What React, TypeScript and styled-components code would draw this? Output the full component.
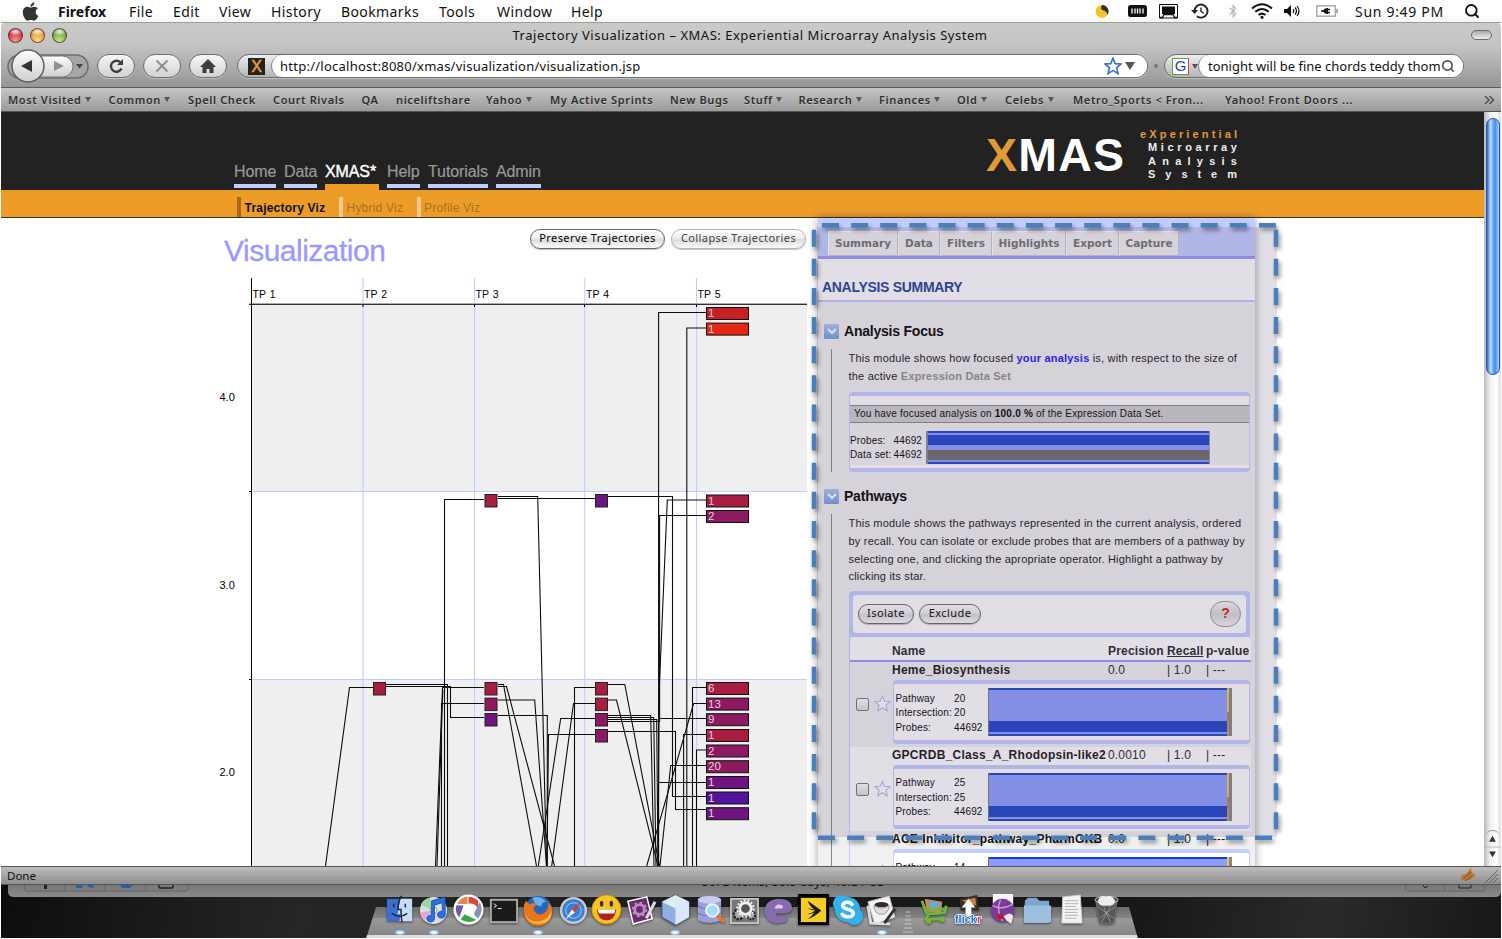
import React from "react";
import styled, { createGlobalStyle } from "styled-components";
import { FaApple, FaBluetoothB } from "react-icons/fa";
import { Search } from "lucide-react";

const UI = `"Noto Sans", "Open Sans", sans-serif`;
const SANS = `"Liberation Sans", Arial, sans-serif`;
const VERD = `"DejaVu Sans", Verdana, sans-serif`;

const Global = createGlobalStyle`
  * { box-sizing: border-box; }
  body { margin: 0; background: #fff; overflow: hidden; }
`;

const Screen = styled.div`
  width: 1501px; height: 938px; padding-left: 1px; display: flex; flex-direction: column;
  overflow: hidden; font-family: ${UI}; background: #fff; position: relative;
`;

/* ---------- menu bar ---------- */
const MenuBar = styled.div`
  height: 23px; flex: none; display: flex; align-items: center; padding-left: 19px;
  background: linear-gradient(#fff 60%, #f3f7f0); border-bottom: 1px solid #9aa097; color: #111;
`;
const MenuItem = styled.span<{ $w: number; $ls?: number; $b?: boolean }>`
  width: ${p => p.$w}px; flex: none; font-size: 14px; line-height: 22px; white-space: nowrap; padding-top: 1px;
  letter-spacing: ${p => p.$ls ?? 0.4}px; font-weight: ${p => (p.$b ? 700 : 400)};
`;
const MenuIcon = styled.span<{ $w: number }>`
  width: ${p => p.$w}px; flex: none; display: flex; align-items: center; height: 22px;
  svg { display: block; }
`;

/* ---------- browser chrome ---------- */
const Chrome = styled.div`
  height: 65px; flex: none; background: linear-gradient(#cacaca 0, #c4c4c4 35%, #959595);
  border-bottom: 1px solid #5c5c5c; border-radius: 4px 4px 0 0; display: flex; flex-direction: column;
`;
const TitleRow = styled.div`
  height: 24px; display: flex; align-items: center; padding: 0 9px 0 7px; justify-content: space-between;
`;
const Lights = styled.div`display: flex; gap: 7px; width: 60px;`;
const Light = styled.span<{ $a: string; $b: string }>`
  width: 15px; height: 15px; border-radius: 50%; border: 1px solid rgba(60,30,20,.65);
  background: radial-gradient(ellipse 60% 32% at 50% 20%, rgba(255,255,255,.9), rgba(255,255,255,0)),
    radial-gradient(circle at 50% 90%, ${p => p.$b}, ${p => p.$a} 75%);
`;
const WinTitle = styled.span`font-size: 13px; color: #111; letter-spacing: 0.52px; white-space: nowrap;`;
const Pill = styled.span`
  width: 21px; height: 10px; border-radius: 5px; border: 1.5px solid #6b6b6b; background: linear-gradient(#aaa, #eee);
`;
const NavRow = styled.div`height: 40px; display: flex; align-items: center; padding: 0 0 2px 6px;`;
const KeyHole = styled.svg`width: 84px; height: 36px; flex: none; display: block; margin-right: 6px;`;
const RoundBtn = styled.span`
  width: 38px; height: 24px; margin-right: 8px; flex: none; border-radius: 12px; border: 1.5px solid #6d6d6d;
  background: linear-gradient(#f6f6f6, #d2d2d2); display: flex; align-items: center; justify-content: center;
  box-shadow: 0 1px 0 rgba(255,255,255,.35);
`;
const Field = styled.div<{ $w: number; $ml: number }>`
  width: ${p => p.$w}px; margin-left: ${p => p.$ml}px; height: 24px; flex: none; display: flex; align-items: stretch;
  border: 1.5px solid #6d6d6d; border-radius: 12px; background: linear-gradient(#eee, #b4b4b4); overflow: hidden;
  box-shadow: 0 1px 0 rgba(255,255,255,.35);
`;
const FieldHead = styled.div<{ $w: number; $pl?: number }>`
  width: ${p => p.$w}px; flex: none; display: flex; align-items: center; gap: 3px; padding-left: ${p => p.$pl ?? 10}px;
`;
const FieldBody = styled.div<{ $pl?: number; $ls?: number }>`
  flex: 1; background: #fff; border-radius: 12px 0 0 12px; border-left: 1px solid #888; display: flex; align-items: center;
  padding-left: ${p => p.$pl ?? 8}px; font-size: 13px; color: #111; white-space: nowrap; letter-spacing: ${p => p.$ls ?? .25}px;
`;
const Favicon = styled.span`
  width: 17px; height: 17px; background: #222; color: #f09c27; font: 16px/17px ${SANS}; text-align: center;
  -webkit-text-stroke: .5px #f09c27; letter-spacing: 0;
`;
const GIcon = styled.span`
  width: 17px; height: 17px; background: #fff; border: 1.5px solid #5ba83a; border-right-color: #d33; color: #2a3fae;
  font: 15px/14px ${SANS}; text-align: center; letter-spacing: 0;
`;
const Spring = styled.span`flex: 1;`;
const Dot = styled.span`width: 4px; height: 4px; border-radius: 2px; background: #777; margin-left: 6px;`;

const Bookmarks = styled.div`
  height: 24px; flex: none; display: flex; align-items: center; padding-left: 7px; background: linear-gradient(#c6c6c6, #9a9a9a);
  border-bottom: 1px solid #555;
`;
const Bookmark = styled.span<{ $w: number }>`
  width: ${p => p.$w}px; flex: none; display: flex; align-items: center; gap: 3.5px; white-space: nowrap;
  font: 600 11px/22px ${UI}; color: #2e2e2e; letter-spacing: .62px; text-shadow: 0 1px 0 rgba(255,255,255,.3);
`;
const Caret = styled.i`border: 3.5px solid transparent; border-top: 5px solid #555; border-bottom: 0;`;

/* ---------- page ---------- */
const Viewport = styled.div`height: 754px; flex: none; display: flex; overflow: hidden;`;
const Page = styled.div`width: 1483px; flex: none; display: flex; flex-direction: column; overflow: hidden; background: #fff;`;
const Scrollbar = styled.div`
  flex: 1; background: linear-gradient(90deg, #c4c4c4, #f2f2f2 35%, #fff 70%, #ddd); border-left: 1px solid #bbb;
  display: flex; flex-direction: column; justify-content: space-between; padding-top: 6px;
`;
const Thumb = styled.div`
  height: 257px; margin: 0 1px; border-radius: 7px; border: 1px solid #2a52b0;
  background: linear-gradient(90deg, #2f62cf, #b9dcff 30%, #5ea2f4 55%, #4a8fee 70%, #a9d8ff);
`;
const Arrows = styled.svg`width: 15px; height: 36px; display: block; border-top: 1px solid #999; border-radius: 7px 7px 0 0;`;
const Header = styled.header`
  height: 78px; flex: none; background: #222; display: flex; align-items: flex-end; padding-left: 233px;
`;
const NavTabs = styled.nav`display: flex; gap: 8px; width: 752px;`;
const NavTab = styled.a<{ $w: number; $on?: boolean }>`
  width: ${p => p.$w}px; font: 16px/24px ${SANS}; letter-spacing: -.1px; white-space: nowrap; display: flex; flex-direction: column;
  color: ${p => (p.$on ? "#fff" : "#999")}; -webkit-text-stroke: ${p => (p.$on ? "0.4px #fff" : "0.2px #999")};
  &::after { content: ""; height: ${p => (p.$on ? 6 : 4)}px; margin: 0 0 ${p => (p.$on ? 0 : 2)}px; background: ${p => (p.$on ? "#ed9c28" : "#c2cdff")}; }
`;
const Logo = styled.div`
  font: bold 46.5px/48px ${SANS}; color: #fff; letter-spacing: 1.2px; width: 153px; height: 59px; white-space: nowrap;
  em { font-style: normal; color: #e29a35; }
`;
const LogoWords = styled.div`
  font: bold 11px/13.3px ${SANS}; color: #eee; width: 98px; height: 62px; display: flex; flex-direction: column; align-items: flex-end;
`;
const LogoWord = styled.span<{ $w: number; $c?: string }>`
  width: ${p => p.$w}px; display: flex; justify-content: space-between; color: ${p => p.$c ?? "#eee"};
`;
const SubNav = styled.div`
  height: 28px; flex: none; background: #ed9c28; border-bottom: 1px solid #3b3226; display: flex; align-items: flex-end; padding-left: 236px;
`;
const SubItem = styled.span<{ $w: number; $on?: boolean }>`
  width: ${p => p.$w}px; height: 20px; border-left: 4px solid ${p => (p.$on ? "#a8691a" : "#f8cc8a")}; padding-left: 3.5px;
  font: ${p => (p.$on ? "bold" : "normal")} 12px/22.5px ${SANS}; color: ${p => (p.$on ? "#111" : "#a8741f")};
  letter-spacing: .22px; white-space: nowrap;
`;
const Main = styled.div`flex: 1; display: flex; min-height: 0;`;
const VizColumn = styled.section`width: 817px; flex: none; padding-left: 211px; padding-top: 10px;`;
const VizHead = styled.div`display: flex; height: 42px; padding-left: 12px;`;
const H1 = styled.h1`margin: 0; width: 306px; font: 30px/45px ${SANS}; letter-spacing: -.5px; color: #9999ff; -webkit-text-stroke: .3px #9999ff;`;
const AquaButton = styled.button<{ $w: number; $dim?: boolean; $mr?: number }>`
  width: ${p => p.$w}px; height: 20px; padding: 0 0 2px; flex: none; margin: 1px ${p => p.$mr ?? 6}px 0 0; border-radius: 10px;
  border: 1.5px solid ${p => (p.$dim ? "#b5b5b5" : "#666")}; background: linear-gradient(#fff, #ededed 45%, #dcdcdc 55%, #fafafa);
  font: 11px/14px ${UI}; letter-spacing: .42px; color: ${p => (p.$dim ? "#444" : "#000")}; white-space: nowrap;
  box-shadow: 0 1px 1px rgba(0,0,0,.25);
`;
const ChartSvg = styled.svg`display: block; width: 596px; height: 596px;`;

/* ---------- side panel ---------- */
const Panel = styled.aside`
  width: 437px; flex: none; height: 700px; background: #f0f0f0; box-shadow: 0 0 9px rgba(0,0,0,.38);
  display: flex; flex-direction: column; font-family: ${SANS}; color: #000;
`;
const Tabs = styled.div`
  height: 41px; flex: none; background: #c2cdff; border-bottom: 3px solid #9999ff; display: flex; align-items: flex-end; padding-left: 10px;
`;
const Tab = styled.span<{ $w: number; $ls?: number }>`
  width: ${p => p.$w}px; height: 25px; background: #f0f0f0; border-right: 1px solid #c8c8c8; border-bottom: 1px solid #c8c8c8;
  border-left: 1px solid #fff; border-top: 1px solid #fff;
  font: bold 10.5px/23px ${VERD}; color: #707070; text-align: center; letter-spacing: ${p => p.$ls ?? 0}px; white-space: nowrap;
`;
const PanelTitle = styled.h2`
  margin: 0; height: 43px; flex: none; padding: 19px 0 0 4px; background: #fff; border-bottom: 2px solid #c6c4ff; 
  font: bold 14px/18px ${SANS}; letter-spacing: -.3px; color: #1c3c97;
`;
const ModuleHead = styled.h3<{ $mt: number; $ls?: number }>`
  margin: ${p => p.$mt}px 0 0; height: 16px; flex: none; display: flex; align-items: center; gap: 5px; padding-left: 6px;
  font: bold 14px/16px ${SANS}; letter-spacing: -.22px;
`;
const Toggle = styled.span`
  width: 15px; height: 15px; background: linear-gradient(#a9c8f5, #6f9ee0); display: flex; align-items: center; justify-content: center;
  border-radius: 1px;
`;
const ModuleBody = styled.div<{ $h: number }>`
  margin: 10px 0 0 13px; height: ${p => p.$h}px; border-left: 1px solid #888; padding: 1px 5px 0 17px; display: flex; flex-direction: column;
`;
const Line = styled.div`
  font: 11px/17.8px ${SANS}; letter-spacing: .2px; white-space: nowrap; color: #111; margin-left: -.5px;
`;
const Blue = styled.b`color: #1414ff;`;
const Grey = styled.b`color: #8f8f8f;`;
const FocusBox = styled.div`
  margin-top: 6px; height: 81px; border: 1px solid #c2cdff; border-top-width: 4px; border-bottom-width: 4px; border-radius: 4px; background: #fff;
  display: flex; flex-direction: column;
`;
const FocusNote = styled.div`
  margin-top: 9px; height: 18px; background: #cecece; border: solid #888; border-width: 1px 0; padding-left: 4px;
  font: 10px/16px ${SANS}; letter-spacing: .21px; white-space: nowrap;
`;
const FocusData = styled.div`height: 42px; background: #f3f3f3; display: flex; padding-top: 8px;`;
const Stat = styled.div<{ $w: number; $lh?: number; $pt?: number }>`
  width: ${p => p.$w}px; flex: none; font: 10px/${p => p.$lh ?? 14.6}px ${SANS}; white-space: nowrap; letter-spacing: .15px; padding-top: ${p => p.$pt ?? 3}px;
`;
const FocusBars = styled.div`
  width: 284px; height: 33px; border-left: 2px solid #888; border-right: 1px solid #999;
  background: linear-gradient(#1a3fc9 0 2px, #8a9dff 2px 4px, #1a3fc9 4px 14px, #8a9dff 14px 19px, #6b6b6b 19px 29px, #8a9dff 29px 31px, #1a3fc9 31px);
`;
const Operators = styled.div`
  margin-top: 5px; height: 46px; flex: none; border: 4px solid #c2cdff; border-radius: 4px 4px 0 0; background: #c2cdff;
`;
const OperatorsInner = styled.div`
  height: 38px; border-radius: 4px; background: #fff; display: flex; align-items: center; padding: 0 5px;
  justify-content: space-between;
`;
const Group = styled.div`display: flex; padding-bottom: 2px;`;
const HelpButton = styled.span`
  width: 31px; height: 26px; border-radius: 13px; border: 1.5px solid #999; background: linear-gradient(#f8f8f8, #d8d8d8 50%, #f2f2f2);
  color: #d8182a; font: bold 14px/23px ${SANS}; text-align: center;
`;
const Table = styled.div`border-left: 1px solid #c2cdff; margin-right: -1px; flex: 1; background: #f4f4f4;`;
const Row = styled.div<{ $alt?: boolean }>`height: 84.6px; background: ${p => (p.$alt ? "#fff" : "#f0f0f0")};`;
const Cols = styled.div<{ $head?: boolean }>`
  display: grid; grid-template-columns: 42px 216px 59px 39px 1fr; white-space: nowrap; color: #222;
  height: ${p => (p.$head ? 25 : 18)}px; padding-top: ${p => (p.$head ? 6 : 0)}px; font: ${p => (p.$head ? "bold" : "normal")} 12px/17px ${SANS};
  letter-spacing: .18px;
  ${p => p.$head && "background: #fff; border-radius: 4px 4px 0 0; border-bottom: 2px solid #9999ff;"}
  b { letter-spacing: .26px; color: #111; }
`;
const RowBody = styled.div`display: flex; align-items: flex-start;`;
const Check = styled.span`
  width: 13px; height: 13px; margin: 18px 5px 0 6px; border: 1.5px solid #777; border-radius: 2px; background: linear-gradient(#fff, #ddd);
`;
const StarCell = styled.span`margin-top: 15px; display: flex;`;
const RowBox = styled.div`
  margin-left: 2px; width: 357px; height: 64px; border: 1px solid #c2cdff; border-top-width: 4px; border-bottom-width: 4px; border-radius: 4px;
  background: #fff; display: flex; padding: 4px 0 0 1.5px;
`;
const RowBars = styled.div`
  width: 244px; height: 48px; border-left: 1px solid #777; border-right: 2px solid #8a8580;
  background: linear-gradient(#1a3fc9 0 2px, #8a9dff 2px 33px, #1a3fc9 33px 44px, #8a9dff 44px 46px, #1a3fc9 46px);
  display: flex; justify-content: flex-end;
  &::after { content: ""; width: 2px; border-right: 1px solid #8a8580; background: linear-gradient(#e6c95a 50%, #d0704a 50%, #c89a6a); }
`;

/* translucent callout drawn over the side panel */
const Callout = styled.svg`position: absolute; left: 805px; top: 215px; width: 485px; height: 635px; pointer-events: none;`;
const Dashes = styled.g`filter: drop-shadow(2px 3px 2px rgba(0,0,0,.4));`;

/* ---------- bottom ---------- */
const StatusBar = styled.div`
  height: 19px; flex: none; background: linear-gradient(#bdbdbd, #8d8d8d); border-top: 1px solid #555; border-bottom: 1px solid #555;
  display: flex; align-items: center; padding: 0 3px 0 6px; justify-content: space-between; font: 11.5px/17px ${UI}; color: #111;
`;
const Desktop = styled.div`
  flex: 1; background: linear-gradient(100deg, #0c0d0d, #252725 20%, #1a1b1a 50%, #161716 75%, #2a2b29 88%, #171817); display: flex; flex-direction: column;
`;
const BackWindow = styled.div`
  height: 12px; flex: none; margin-left: 7px; border-radius: 0 0 5px 5px; background: linear-gradient(#777, #8a8a8a); overflow: hidden;
  display: flex; padding: 0 16px 0 16px; font: 11px/12px ${UI}; color: #111;
  svg { flex: none; }
`;
const BackText = styled.span`margin: -9px auto 0 514px; letter-spacing: .6px; height: 14px; font-weight: 500; white-space: nowrap;`;
const DockArea = styled.div`height: 42px; display: flex; margin-left: 365px; width: 772px; position: relative;`;
const DockShelf = styled.svg`position: absolute; left: 0; top: 10px; width: 772px; height: 32px;`;
const DockRow = styled.div`position: relative; display: flex; margin: -4.5px 0 0 16.6px;`;
const Slot = styled.span<{ $run?: boolean }>`
  width: 34.45px; height: 44px; display: flex; flex-direction: column; align-items: center;
  svg { display: block; width: 33px; height: 33px; filter: drop-shadow(0 1px 1px rgba(0,0,0,.5)); }
  &::after { content: ""; width: 10px; height: 5px; margin-top: 4px; border-radius: 50%;
    background: ${p => (p.$run ? "radial-gradient(#fff 25%, #8cc4ff 60%, transparent)" : "none")}; }
`;
const DockGap = styled.span`width: 17.6px; display: flex; justify-content: center; padding-top: 18px; svg { width: 10px; height: 22px; opacity: .6; }`;

/* ---------- data ---------- */
const bookmarks: [string, number, boolean][] = [
  ["Most Visited", 100.5, true], ["Common", 79.5, true], ["Spell Check", 85, false], ["Court Rivals", 88.5, false], ["QA", 34.5, false],
  ["niceliftshare", 90, false], ["Yahoo", 64, true], ["My Active Sprints", 120, false], ["New Bugs", 74, false], ["Stuff", 54.5, true],
  ["Research", 80.5, true], ["Finances", 78, true], ["Old", 48, true], ["Celebs", 68, true], ["Metro_Sports < Fron...", 152, false],
  ["Yahoo! Front Doors ...", 259, false],
];
const R = "#a81d42", M = "#8b1a60", P = "#6f1480";
const groups: [number, number, string, string][] = [
  [706, 307, "#c62026", "1"], [706, 322.6, "#e22813", "1"], [706, 494.5, R, "1"], [706, 510, M, "2"],
  [706, 682, R, "6"], [706, 697.6, M, "13"], [706, 713.2, M, "9"], [706, 729, R, "1"], [706, 744.5, M, "2"],
  [706, 760.2, M, "20"], [706, 776, P, "1"], [706, 791.5, "#51139b", "1"], [706, 807.2, P, "1"],
];
const nodes: [number, number, string][] = [
  [484.5, 494, R], [595, 494, P], [373, 682, R], [484.5, 682, R], [484.5, 697.6, M], [484.5, 713, P],
  [595, 682, R], [595, 697.6, R], [595, 713, M], [595, 729, M],
];
const paths = [
  "M325.5 866L349.5 687.5H373", "M386 684.5H447.5V866", "M386 686.5H450.5V717.5H484", "M444.5 866V499.5H484",
  "M484 687.5H442.5L435.5 866", "M484 703.5H441.5V866", "M442.8 690L437 866",
  "M498 684.5H503.5L536.5 866", "M498 686.5H506.5L554.5 866", "M498 700H534.7L546.5 866", "M498 715.5H547.3V866",
  "M498 496.5H537.7L546.5 866", "M498 498.5H595", "M595 687.5H574.5V866", "M595 703.5H573.5L551.7 866",
  "M595 718.5H560.7L538.3 866", "M595 734.5H548.5L547 866", "M608 684.5H624.8L659.5 866", "M608 700H616.5L658 866",
  "M608 715.5H650.7L654 866", "M608 717.5H653.7L656 866", "M608 719.5H656.7L658 866", "M608 721.5H659.6V515.5H706",
  "M659.5 718.5H706", "M706 312.5H658.6V866", "M706 782.5H658.6", "M608 731.5H675.5V809.5H706", "M608 496.5H672.5V796.5H706",
  "M706 328H686.8V866", "M706 500H667.3L659.2 690L658 866", "M706 687.5H692.5V866", "M706 703.5H693.6L646.7 866",
  "M706 734.5H683.6V866", "M706 750H696.5V866", "M706 765.5H670.7L660 866",
];

const Chart = () => (
  <ChartSvg viewBox="212 270 596 596" fontFamily={SANS}>
    <rect x="252" y="305" width="555" height="186" fill="#efefef" />
    <rect x="252" y="680" width="555" height="187" fill="#efefef" />
    <g fill="#c2cdff">
      <rect x="362" y="278" width="2" height="590" opacity=".6" />
      {[474, 584.2, 696].map(x => <rect key={x} x={x} y="278" width="1.1" height="590" />)}
      <rect x="252" y="491" width="555" height="1" />
      <rect x="252" y="679" width="555" height="1" />
    </g>
    <rect x="249" y="303" width="558" height="1" fill="#aaa" />
    <rect x="249" y="304" width="558" height="1" fill="#333" />
    <rect x="251" y="278" width="1" height="590" />
    {[362.5, 474, 584, 696].map(x => <rect key={x} x={x} y="305" width="1" height="2" />)}
    <rect x="249" y="491" width="2" height="1" />
    <rect x="249" y="679" width="2" height="1" />
    <g fontSize="10.5">
      {[252.5, 364, 475.5, 586, 697.5].map((x, i) => <text key={x} x={x} y="298" wordSpacing="1">TP {i + 1}</text>)}
    </g>
    <g fontSize="11">
      <text x="219.5" y="401">4.0</text>
      <text x="219.5" y="588.5">3.0</text>
      <text x="219.5" y="776">2.0</text>
    </g>
    <g fill="none" stroke="#000" strokeWidth="1.1" opacity=".95">{paths.map((d, i) => <path key={i} d={d} />)}</g>
    {nodes.map(([x, y, c], i) => <rect key={i} x={x + 0.5} y={y + 0.5} width="12" height="12.5" fill={c} stroke="#222" />)}
    {groups.map(([x, y, c, n], i) => (
      <g key={i}>
        <rect x={x + 0.5} y={y + 0.5} width="42" height="12" fill={c} stroke="#111" />
        <text x={x + 2} y={y + 10} fontSize="11.5" fill="#f0d0de">{n}</text>
      </g>
    ))}
  </ChartSvg>
);

const Star = ({ s, c, w }: { s: number; c: string; w: number }) => (
  <svg width={s} height={s} viewBox="0 0 18 18"><path d="M9 1.2l2.2 5.4 5.8.4-4.4 3.8 1.4 5.8L9 13.4l-5 3.2 1.4-5.8L1 7l5.8-.4z" fill="#fff" stroke={c} strokeWidth={w} /></svg>
);
const Chevron = () => (
  <svg width="10" height="8" viewBox="0 0 10 8"><path d="M1 2l4 4 4-4" stroke="#fff" strokeWidth="2" fill="none" /></svg>
);

const PathwayRow = ({ name, precision, n, alt }: { name: string; precision: string; n: string; alt?: boolean }) => (
  <Row $alt={alt}>
    <Cols><span /><b>{name}</b><span>{precision}</span><span>| 1.0</span><span>| ---</span></Cols>
    <RowBody>
      <Check />
      <StarCell><Star s={17} c="#a9bff0" w={1.2} /></StarCell>
      <RowBox>
        <Stat $w={58.5} $lh={14.5} $pt={3.5}>Pathway<br />Intersection:<br />Probes:</Stat>
        <Stat $w={34} $lh={14.5} $pt={3.5}>{n}<br />{n}<br />44692</Stat>
        <RowBars />
      </RowBox>
    </RowBody>
  </Row>
);

const Sidebar = () => (
  <Panel>
    <Tabs>
      <Tab $w={70}>Summary</Tab><Tab $w={42}>Data</Tab><Tab $w={52}>Filters</Tab><Tab $w={74}>Highlights</Tab><Tab $w={53}>Export</Tab><Tab $w={60}>Capture</Tab>
    </Tabs>
    <PanelTitle>ANALYSIS SUMMARY</PanelTitle>
    <ModuleHead $mt={21}><Toggle><Chevron /></Toggle>Analysis Focus</ModuleHead>
    <ModuleBody $h={123}>
      <Line>This module shows how focused <Blue>your analysis</Blue> is, with respect to the size of</Line>
      <Line>the active <Grey>Expression Data Set</Grey></Line>
      <FocusBox>
        <FocusNote>You have focused analysis on <b>100.0 %</b> of the Expression Data Set.</FocusNote>
        <FocusData>
          <Stat $w={43.5}>Probes:<br />Data set:</Stat>
          <Stat $w={32.5}>44692<br />44692</Stat>
          <FocusBars />
        </FocusData>
      </FocusBox>
    </ModuleBody>
    <ModuleHead $mt={16}><Toggle><Chevron /></Toggle>Pathways</ModuleHead>
    <ModuleBody $h={400}>
      <Line>This module shows the pathways represented in the current analysis, ordered</Line>
      <Line>by recall. You can isolate or exclude probes that are members of a pathway by</Line>
      <Line>selecting one, and clicking the apropriate operator. Highlight a pathway by</Line>
      <Line>clicking its star.</Line>
      <Operators>
        <OperatorsInner>
          <Group><AquaButton $w={56} $mr={5}>Isolate</AquaButton><AquaButton $w={62}>Exclude</AquaButton></Group>
          <HelpButton>?</HelpButton>
        </OperatorsInner>
      </Operators>
      <Table>
        <Cols $head><span /><span>Name</span><span>Precision</span><u>Recall</u><span>p-value</span></Cols>
        <PathwayRow name="Heme_Biosynthesis" precision="0.0" n="20" />
        <PathwayRow name="GPCRDB_Class_A_Rhodopsin-like2" precision="0.0010" n="25" alt />
        <PathwayRow name="ACE-Inhibitor_pathway_PharmGKB" precision="0.0" n="14" />
      </Table>
    </ModuleBody>
  </Panel>
);

const CalloutBox = () => (
  <Callout viewBox="805 215 485 635">
    <rect x="817" y="227" width="460" height="610" fill="rgb(108,92,128)" opacity=".2" />
    <Dashes stroke="#4a7fbb" strokeWidth="4.5" fill="none" strokeDasharray="17 12.13">
      <path d="M822 225.3H1277" />
      <path d="M814 229.7V835" />
      <path d="M1276 229.7V835" />
      <path d="M818 837.8H1273" />
    </Dashes>
  </Callout>
);

/* ---------- dock icons ---------- */
const dockIcons: { run?: boolean; art: React.ReactNode }[] = [
  { run: true, art: <><rect x="4" y="6" width="26" height="23" fill="#3b6fd0" /><path d="M18 6h12v23H17l1-7h-3z" fill="#c9dcf5" /><path d="M19 3q-4 7-3.5 14h3q0 7 1 13M9 21q8 6 16 0" fill="none" stroke="#182640" strokeWidth="1.5" /><path d="M11 11v4M23 11v4" stroke="#182640" strokeWidth="1.5" /></> },
  { run: true, art: <><circle cx="16" cy="18" r="14" fill="#d8dde2" /><path d="M16 18L3 12A14 14 0 0 1 12 5z" fill="#9bd89a" /><path d="M16 18L6 28A14 14 0 0 1 2 20z" fill="#e3a9d0" /><circle cx="16" cy="18" r="3.5" fill="#fff" stroke="#999" /><path d="M14 8l14-4v18a4 3.500 0 1 1-3-3V10l-8 2.500V26a4 3.500 0 1 1-3-3z" fill="#2b6fe0" stroke="#1748a8" strokeWidth=".8" /></> },
  { art: <><circle cx="17" cy="17" r="15.5" fill="#fff" /><path d="M17 11V4a13.500 13.500 0 0 1 10 4v10a8 8 0 0 0-10-7z" fill="#d9453b" /><path d="M16 3.500v8L5.500 11A13.500 13.500 0 0 1 16 3.500z" fill="#e08a4a" /><path d="M28.500 9.500a14 14 0 0 1-2 17l-4-5z" fill="#8492b5" /><path d="M4.500 12.500L12 13l-4.500 12a13.500 13.500 0 0 1-3-12.500z" fill="#6a58a8" /><path d="M13 22l12 5.500a13.500 13.500 0 0 1-16-.5z" fill="#3fa348" /><circle cx="17" cy="17" r="6" fill="#fff" /></> },
  { art: <><rect x="3" y="6" width="29" height="25" fill="#aaa" /><rect x="5" y="8" width="25" height="21" fill="#1b1b1b" /><path d="M7 11l3 2-3 2M11 16h4" stroke="#eee" fill="none" /></> },
  { run: true, art: <><circle cx="18" cy="17" r="14" fill="#2a66b8" /><path d="M12 5q8-3 14 4-5 0-5 5l-6-2z" fill="#6db0ea" /><path d="M5 8l4 4q4-3 7 0-5 3-2 7 4 5 9 2 6-3 5-11 5 4 4 10A14.500 14.500 0 0 1 3 19Q2 13 5 8z" fill="#e8751a" /><path d="M4 20q3 11 15 9 10-2 12-11 2 12-12 14Q6 32 4 20z" fill="#f5b83c" /></> },
  { art: <><circle cx="18" cy="18" r="14" fill="#c8ccd0" /><circle cx="18" cy="18" r="11.5" fill="#3a7fd0" /><circle cx="18" cy="18" r="8" fill="none" stroke="#a8d0f5" /><path d="M26 9l-6.500 11-3-3z" fill="#e03a2a" /><path d="M10 27l6.500-10 3 3z" fill="#fff" /></> },
  { art: <><circle cx="17" cy="17" r="15" fill="#f7c51e" stroke="#d9900f" /><ellipse cx="12" cy="11" rx="1.8" ry="3" fill="#3a2a7a" /><ellipse cx="22" cy="11" rx="1.8" ry="3" fill="#3a2a7a" /><path d="M7 17h20q-1 11-10 11T7 17z" fill="#b3201a" /><path d="M8 17h18l-1 4H9z" fill="#fff" /></> },
  { art: <><path d="M3 8l21-5 6 24-21 6z" fill="#fff" /><path d="M5 9l18-4 5 21-18 5z" fill="#6e2a70" /><circle cx="16" cy="17" r="5" fill="none" stroke="#b890bd" strokeWidth="3" /><circle cx="16" cy="17" r="7" fill="none" stroke="#b890bd" strokeWidth="2" strokeDasharray="2.5 3" /><path d="M32 9l-9 17" stroke="#ddd" strokeWidth="3" /></> },
  { run: true, art: <><path d="M17 2l14 7v16l-14 8-14-8V9z" fill="#8fb0e0" stroke="#3a5288" /><path d="M17 2l14 7-14 7L3 9z" fill="#dceef0" /><path d="M17 16l14-7v16l-14 8z" fill="#dbe8fa" /></> },
  { art: <><path d="M5 7h24v21q-12 6-24 0z" fill="#9aa0dc" /><ellipse cx="17" cy="7" rx="12" ry="4" fill="#c8ccf0" /><path d="M5 14q12 5 24 0M5 21q12 5 24 0" stroke="#6a70b0" fill="none" /><circle cx="20" cy="18" r="6.5" fill="#a8dcf0" stroke="#e8f4fa" strokeWidth="2" /><path d="M25 23l7 7" stroke="#e0782a" strokeWidth="4" /></> },
  { art: <><rect x="3" y="6" width="28" height="25" fill="#777" stroke="#ddd" strokeWidth="1.5" /><circle cx="11" cy="22" r="5" fill="#aaa" stroke="#222" strokeWidth="2.5" strokeDasharray="2.5 1.2" /><circle cx="24" cy="23" r="4" fill="#aaa" stroke="#222" strokeWidth="2" strokeDasharray="2 1" /><circle cx="18" cy="16" r="6" fill="#555" stroke="#eee" strokeWidth="3" /><circle cx="18" cy="16" r="8.500" fill="none" stroke="#eee" strokeWidth="2" strokeDasharray="2 1.8" /></> },
  { art: <><path d="M3 20Q2 8 16 6q15 0 15 10 0 4-8 5h-9q1 6 11 3 5 6-7 7Q4 32 3 20z" fill="#8a6aae" /><path d="M13 16q1-5 6-4 4 1 2 4z" fill="#d9c8ea" /></> },
  { art: <><rect x="1" y="1" width="32" height="32" fill="#000" /><rect x="4" y="5" width="26" height="25" fill="#f8cc28" /><path d="M11 8q7 5 14 10-6 6-14 9 4-3 7-7-4 2-8 2 5-1 9-4-5 0-9-3 5 2 8 2-5-3-7-9z" fill="#1a1a1a" /></> },
  { art: <><circle cx="17" cy="17" r="13" fill="#35b0ee" /><circle cx="11" cy="11" r="9" fill="#35b0ee" /><circle cx="24" cy="24" r="9" fill="#35b0ee" /><path d="M22.500 13q-2-4-6-3.500-4.500.5-4.500 3.500 0 2.500 5 3.700 6 1.300 6 4.300-.5 3.500-6 3.500-4.500 0-6-4" fill="none" stroke="#fff" strokeWidth="3.6" /></> },
  { run: true, art: <><path d="M3 9l22-6 6 22-21 7z" fill="#f2f2f2" stroke="#bbb" /><path d="M3 13l3 18 20 1" fill="none" stroke="#ddd" strokeWidth="3" /><ellipse cx="17" cy="12" rx="8" ry="3.5" fill="#3a2a20" stroke="#fff" strokeWidth="1.5" /><path d="M9 13q1 9 8 9t8-9q-8 5-16 0z" fill="#ddd" stroke="#999" /><path d="M31 16L20 31" stroke="#333" strokeWidth="3" /></> },
];
const dockRight: React.ReactNode[] = [
  <><path d="M8 6l18 3-1 12-15-2z" fill="#c98a5a" /><path d="M12 8l11 2v7l-10-1z" fill="#6aa8e0" /><path d="M5 8l5 13q9 1 19-1l1-7M11 16l18 1M12 22l-3 5h17" fill="none" stroke="#6fb83a" strokeWidth="2.8" /><circle cx="12" cy="29" r="2.8" fill="#6fb83a" /><circle cx="26" cy="27" r="2.800" fill="#6fb83a" /></>,
  <><path d="M8 6l18-4 2 16H9z" fill="#3a3026" /><path d="M10 8l14-3 1 8z" fill="#c8823a" /><path d="M17 6l7 9h-4v9h-6v-9h-4z" fill="#fff" /><text x="3" y="31" fontFamily={SANS} fontSize="11" fontWeight="700" fill="#1a6fd0" stroke="#fff" strokeWidth="1.5" paintOrder="stroke" textLength="27">flick<tspan fill="#e8288a">r</tspan></text></>,
  <><rect x="7" y="1" width="21" height="20" fill="#f8f8f8" /><circle cx="17" cy="18" r="12" fill="#7a3a9a" /><path d="M7 13q9 5 20-1M15 7q-5 10 2 22" fill="none" stroke="#c89ad8" strokeWidth="1.5" /><path d="M18 24q8-6 10 0l-2 8-5-4z" fill="#f0e8e4" /><circle cx="15" cy="24" r="3" fill="#c01828" /></>,
  <><path d="M4 8l3-3h9l3 3h10v23H3z" fill="#7ea6cc" /><path d="M3 13h28v17q-14 2-28 0z" fill="#9cc0e0" /></>,
  <><path d="M8 4l18-2 2 29H7z" fill="#f4f4f4" stroke="#ccc" /><path d="M10 8h14M10 11h14M10 14h12M10 17h14M10 20h13M10 23h14M10 26h12" stroke="#aaa" strokeWidth=".9" /></>,
  <><path d="M5 6l4 25q8 3 16 0l4-25z" fill="#707070" opacity=".9" /><path d="M7 12l3 18q7 2 14 0l3-18q-10 5-20 0z" fill="#555" /><path d="M8 14l16 12M26 14L10 26M14 14l7 16M21 14l-9 16" stroke="#aaa" strokeWidth=".7" /><ellipse cx="17" cy="7" rx="12" ry="3.5" fill="#444" stroke="#ccc" /><path d="M8 8q3-7 8-4 6-3 10 4-1 6-9 5-8 1-9-5z" fill="#eee" /></>,
];

export default function App() {
  return (
    <Screen>
      <Global />
      <MenuBar>
        <MenuIcon $w={38}><FaApple size={21} color="#333" /></MenuIcon>
        <MenuItem $w={71} $b $ls={0}>Firefox</MenuItem>
        <MenuItem $w={44}>File</MenuItem><MenuItem $w={46}>Edit</MenuItem><MenuItem $w={52}>View</MenuItem>
        <MenuItem $w={70}>History</MenuItem><MenuItem $w={98}>Bookmarks</MenuItem><MenuItem $w={58}>Tools</MenuItem>
        <MenuItem $w={74}>Window</MenuItem><MenuItem $w={524}>Help</MenuItem>
        <MenuIcon $w={33}>
          <svg width="15" height="15" viewBox="0 0 15 15"><circle cx="7" cy="7.5" r="6.5" fill="#f5c32c" /><path d="M7 1a6.500 6.500 0 0 1 5.500 10q-.5-4-4-4.500-4-1-1.500-5.500z" fill="#333" /></svg>
        </MenuIcon>
        <MenuIcon $w={31}>
          <svg width="19" height="14" viewBox="0 0 19 14"><rect x="0" y="1" width="19" height="12" rx="2.5" fill="#111" /><path d="M4 4.500v5M7 4.500v5M9.500 4.500v5M12 4.500v5M15 4.500v5" stroke="#fff" strokeWidth="1.3" /></svg>
        </MenuIcon>
        <MenuIcon $w={32}>
          <svg width="19" height="15" viewBox="0 0 19 15"><path d="M.5.5h18v13.500H.5z" fill="#fff" stroke="#111" /><rect x="3" y="2.5" width="13" height="7.5" fill="#111" /><path d="M1 13.500h2.500l1.500-3h9l1.500 3H18" stroke="#111" strokeWidth="1.300" fill="none" /></svg>
        </MenuIcon>
        <MenuIcon $w={35}>
          <svg width="18" height="16" viewBox="0 0 18 16"><path d="M3.500 8A6.500 6.500 0 1 1 6 13.200" fill="none" stroke="#222" strokeWidth="1.9" /><path d="M0 7h7l-3.500 4z" fill="#222" /><path d="M10 4.500V8.500l3 2" fill="none" stroke="#222" strokeWidth="1.400" /></svg>
        </MenuIcon>
        <MenuIcon $w={25}><FaBluetoothB size={14} color="#b5b5b5" /></MenuIcon>
        <MenuIcon $w={33}>
          <svg width="22" height="16" viewBox="0 0 22 16"><path d="M1 5.500q10-8.500 20 0M4.300 8.800q6.700-5.600 13.400 0M7.600 12q3.400-2.800 6.800 0" fill="none" stroke="#111" strokeWidth="2" /><circle cx="11" cy="14.300" r="1.500" fill="#111" /></svg>
        </MenuIcon>
        <MenuIcon $w={32}>
          <svg width="16" height="12" viewBox="0 0 16 12"><path d="M0 4h3l4-4v12L3 8H0z" fill="#111" /><path d="M9 4q1.500 2 0 4M11 2.500q3 3.500 0 7M13 1q4 5 0 10" stroke="#111" strokeWidth="1.2" fill="none" /></svg>
        </MenuIcon>
        <MenuIcon $w={39}>
          <svg width="23" height="12" viewBox="0 0 23 12"><rect x=".8" y=".8" width="18.5" height="10.4" fill="#fff" stroke="#aaa" strokeWidth="1.5" /><path d="M21 4v4" stroke="#aaa" strokeWidth="2" /><path d="M5 6h3M14 4.500h-2M14 7.500h-2" stroke="#111" strokeWidth="1.400" /><path d="M7 6q1-3 5-3v6q-4 0-5-3z" fill="#111" /></svg>
        </MenuIcon>
        <MenuItem $w={109} $ls={0.7}>Sun 9:49 PM</MenuItem>
        <Search size={16} color="#111" strokeWidth={2.8} />
      </MenuBar>

      <Chrome>
        <TitleRow>
          <Lights><Light $a="#c4232a" $b="#ff9a94" /><Light $a="#dd8a2a" $b="#ffe08a" /><Light $a="#5a9a38" $b="#c8ee80" /></Lights>
          <WinTitle>Trajectory Visualization – XMAS: Experiential Microarray Analysis System</WinTitle>
          <Lights><Spring /><Pill /></Lights>
        </TitleRow>
        <NavRow>
          <KeyHole viewBox="0 0 84 36">
            <defs><linearGradient id="kb" x1="0" y1="0" x2="0" y2="1"><stop offset="0" stopColor="#fdfdfd" /><stop offset="1" stopColor="#cfcfcf" /></linearGradient></defs>
            <rect x="1" y="7" width="80" height="23" rx="11.5" fill="#a5a5a5" stroke="#6d6d6d" strokeWidth="1.5" />
            <rect x="24" y="8" width="42" height="21" rx="10.5" fill="url(#kb)" stroke="#777" />
            <circle cx="21" cy="18" r="16" fill="url(#kb)" stroke="#5f5f5f" strokeWidth="1.5" />
            <path d="M14 18l11-6v12z" fill="#333" /><path d="M57 18l-10-5v10z" fill="#8f8f8f" /><path d="M69 16h7l-3.500 4.500z" fill="#444" />
          </KeyHole>
          <RoundBtn><svg width="17" height="16" viewBox="0 0 17 16"><path d="M13.500 10.500a5.500 5.500 0 1 1-1-6" fill="none" stroke="#3f3f3f" strokeWidth="2.4" /><path d="M15 1v6H9z" fill="#3f3f3f" /></svg></RoundBtn>
          <RoundBtn><svg width="14" height="14" viewBox="0 0 14 14"><path d="M1.500 1.500l11 11M12.500 1.500l-11 11" stroke="#8f8f8f" strokeWidth="2" /></svg></RoundBtn>
          <RoundBtn><svg width="18" height="16" viewBox="0 0 18 16"><path d="M9 1l8 8h-2.500v6h-4v-4h-3v4h-4V9H1z" fill="#3f3f3f" /></svg></RoundBtn>
          <Field $w={911} $ml={2}>
            <FieldHead $w={33}><Favicon>X</Favicon></FieldHead>
            <FieldBody>http://localhost:8080/xmas/visualization/visualization.jsp
              <Spring /><Star s={18} c="#3f74c8" w={1.7} />
              <svg width="25" height="8" viewBox="0 0 25 8"><path d="M3 0h10l-5 8z" fill="#555" /></svg>
            </FieldBody>
          </Field>
          <Dot />
          <Field $w={300} $ml={6}>
            <FieldHead $w={33} $pl={7}><GIcon>G</GIcon><Caret /></FieldHead>
            <FieldBody $pl={9} $ls={0}>tonight will be fine chords teddy thom<Search size={14} color="#555" strokeWidth={3} /></FieldBody>
          </Field>
        </NavRow>
      </Chrome>

      <Bookmarks>
        {bookmarks.map(([t, w, c]) => <Bookmark key={t} $w={w}>{t}{c && <Caret />}</Bookmark>)}
        <svg width="10" height="8" viewBox="0 0 10 8"><path d="M1 0l4 4-4 4M5.500 0l4 4-4 4" stroke="#444" strokeWidth="1.3" fill="none" /></svg>
      </Bookmarks>

      <Viewport>
        <Page>
          <Header>
            <NavTabs>
              <NavTab $w={42}>Home</NavTab><NavTab $w={33}>Data</NavTab><NavTab $w={54} $on>XMAS*</NavTab>
              <NavTab $w={33}>Help</NavTab><NavTab $w={60}>Tutorials</NavTab><NavTab $w={45}>Admin</NavTab>
            </NavTabs>
            <Logo><em>X</em>MAS</Logo>
            <LogoWords>
              <LogoWord $w={97} $c="#e29a35">{[..."eXperiential"].map((c, i) => <span key={i}>{c}</span>)}</LogoWord>
              <LogoWord $w={89}>{[..."Microarray"].map((c, i) => <span key={i}>{c}</span>)}</LogoWord>
              <LogoWord $w={89}>{[..."Analysis"].map((c, i) => <span key={i}>{c}</span>)}</LogoWord>
              <LogoWord $w={89}>{[..."System"].map((c, i) => <span key={i}>{c}</span>)}</LogoWord>
            </LogoWords>
          </Header>
          <SubNav>
            <SubItem $w={102} $on>Trajectory Viz</SubItem><SubItem $w={77.5}>Hybrid Viz</SubItem><SubItem $w={90}>Profile Viz</SubItem>
          </SubNav>
          <Main>
            <VizColumn>
              <VizHead>
                <H1>Visualization</H1>
                <AquaButton $w={135}>Preserve Trajectories</AquaButton>
                <AquaButton $w={135} $dim>Collapse Trajectories</AquaButton>
              </VizHead>
              <Chart />
            </VizColumn>
            <Sidebar />
          </Main>
        </Page>
        <Scrollbar>
          <Thumb />
          <Arrows viewBox="0 0 15 36"><path d="M4 11l3.500-6 3.500 6zM4 21h7l-3.500 6z" fill="#333" /><path d="M0 16.500h15" stroke="#bbb" /></Arrows>
        </Scrollbar>
      </Viewport>

      <StatusBar>
        Done
        <svg width="38" height="17" viewBox="0 0 38 17"><path d="M1 13q-1-6 5-6l5-6 1 5q4 1 3 3l-5 4z" fill="#b87a3a" /><path d="M3 12l8-7M5 14l7-5" stroke="#7a4a1a" /><path d="M25 16L38 3M29 16l9-9M33 16l5-5" stroke="#666" /></svg>
      </StatusBar>
      <Desktop>
        <BackWindow>
          <svg width="164" height="8" viewBox="0 0 164 8"><path d="M.5 0v4q0 2 2 2h159q2 0 2-2V0M41 0v6M81 0v6M122 0v6" fill="none" stroke="#666" /><path d="M20 0h3v4h-3z" fill="#222" /><path d="M52 0h7l-1 3h-6zM63 0h6l2 2-5 1zM96 0h13l-3 3h-8z" fill="#2360b0" /><path d="M135 0v2q0 1 1 1h12q1 0 1-1V0" fill="none" stroke="#222" strokeWidth="1.5" /></svg>
          <BackText>5072 items, 38.5 days, 40.24 GB</BackText>
          <svg width="80" height="8" viewBox="0 0 80 8"><path d="M.5 0v4q0 2 2 2h75q2 0 2-2V0M40 0v6" fill="none" stroke="#666" /><path d="M18 0l2 3 3-2M54 0v3h12V0" stroke="#222" fill="none" /></svg>
        </BackWindow>
        <DockArea>
          <DockShelf viewBox="0 0 772 32">
            <defs><linearGradient id="sh" x1="0" y1="0" x2="0" y2="1"><stop offset="0" stopColor="#6c6c6c" /><stop offset=".34" stopColor="#858585" /><stop offset=".36" stopColor="#9a9a9a" /><stop offset=".85" stopColor="#878787" /></linearGradient></defs>
            <path d="M10 0H763L772 32H0z" fill="url(#sh)" /><path d="M1 28H771L772 32H0z" fill="#dcdcdc" />
          </DockShelf>
          <DockRow>
            {dockIcons.map((d, i) => <Slot key={i} $run={d.run}><svg viewBox="0 0 34 34">{d.art}</svg></Slot>)}
            <DockGap><svg viewBox="0 0 10 22"><path d="M3 1h4M2.500 5h5M2 9h6M1.500 13h7M1 17h8M0 21h10" stroke="#ccc" strokeWidth="1.5" /></svg></DockGap>
            {dockRight.map((a, i) => <Slot key={i}><svg viewBox="0 0 34 34">{a}</svg></Slot>)}
          </DockRow>
        </DockArea>
      </Desktop>
      <CalloutBox />
    </Screen>
  );
}
